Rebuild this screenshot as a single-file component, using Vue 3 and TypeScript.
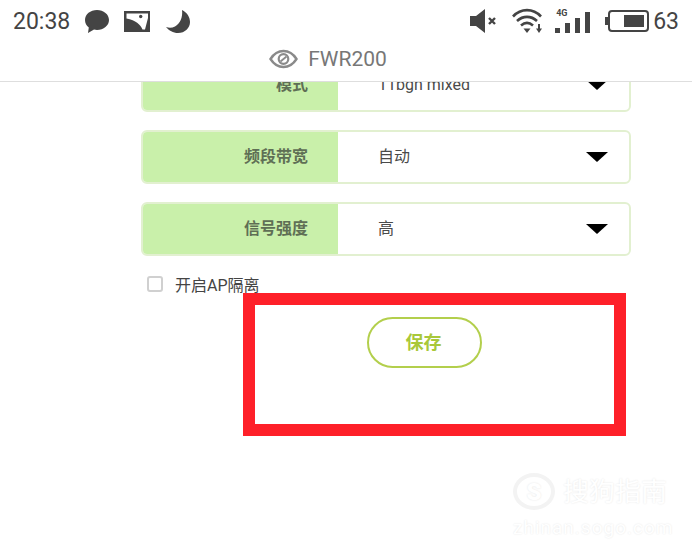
<script setup lang="ts">
interface SelectRow {
  label: string
  value: string
}

const rows: SelectRow[] = [
  { label: '模式', value: '11bgn mixed' },
  { label: '频段带宽', value: '自动' },
  { label: '信号强度', value: '高' },
]
</script>

<template>
  <div class="page">
    <header class="header">
      <div class="status-bar">
        <div class="status-left">
          <span class="time">20:38</span>
          <svg class="icon-bubble" width="26" height="25" viewBox="0 0 26 25">
            <path d="M13 1C6.400 1 1 5.200 1 11c0 3 1.400 5.600 3.800 7.400L4 24l6-3.400c1 .2 2 .4 3 .4 6.600 0 12-4.400 12-10S19.600 1 13 1z" fill="#444" />
          </svg>
          <svg class="icon-picture" width="26" height="22" viewBox="0 0 26 22">
            <path d="M0 1h26v21H0z" fill="#444" />
            <path d="M2.500 3.500H24V8l-3 11.500h-2.500C16 14 12 10.500 2.500 8.500z" fill="#fff" />
            <circle cx="16.700" cy="6.500" r="1.700" fill="#444" />
          </svg>
          <svg class="icon-moon" width="24" height="25" viewBox="0 0 24 25">
            <path d="M16 1c5 2.500 8 7 8 12 0 6-5 11-12 11-5 0-9-2.500-12-6 3 1 6 1 9-.5 5-3 8-9 7-16.500z" fill="#444" />
          </svg>
        </div>
        <div class="status-right">
          <svg class="icon-mute" width="27" height="24" viewBox="0 0 27 24">
            <path d="M0 7h6l9-7v24l-9-7H0z" fill="#444" />
            <path d="M19 9l6 6M25 9l-6 6" stroke="#444" stroke-width="2.400" />
          </svg>
          <svg class="icon-wifi" width="32" height="26" viewBox="0 0 32 26">
            <path d="M1 8.500c8-8.500 20-8.500 28 0M5 13c6-5.500 14-5.500 20 0M9 17.500c4-3.500 8-3.500 12 0" fill="none" stroke="#444" stroke-width="2.600" />
            <path d="M11.500 20.500h7L15 25z" fill="#444" />
            <path d="M27 16v6" stroke="#444" stroke-width="2" />
            <path d="M24 20.500h6L27 25z" fill="#444" />
          </svg>
          <div class="signal">
            <span class="net-label">4G</span>
            <span v-for="h in [5, 10, 15, 21]" :key="h" class="bar" :style="{ height: h + 'px' }"></span>
          </div>
          <div class="battery">
            <span class="battery-cap"></span>
            <span class="battery-body"><span class="battery-fill"></span></span>
          </div>
          <span class="level">63</span>
        </div>
      </div>
      <div class="title-bar">
        <svg width="29" height="20" viewBox="0 0 29 20">
          <path d="M1.500 10C5 4.500 9.500 2 14.500 2s9.500 2.500 13 8c-3.500 5.500-8 8-13 8s-9.500-2.500-13-8z" fill="none" stroke="#8a8a8a" stroke-width="2.400" />
          <circle cx="14.500" cy="10" r="4.800" fill="none" stroke="#8a8a8a" stroke-width="2.200" />
          <path d="M11.500 12.500l6-5" stroke="#8a8a8a" stroke-width="1.800" />
        </svg>
        <span class="device-name">FWR200</span>
      </div>
    </header>

    <main class="content">
      <form class="form" @submit.prevent>
        <div v-for="row in rows" :key="row.label" class="select-row">
          <div class="select-label">{{ row.label }}</div>
          <div class="select-value">
            <span class="value-text">{{ row.value }}</span>
            <span class="arrow"></span>
          </div>
        </div>
        <label class="check-row">
          <span class="checkbox"></span>
          <span>开启AP隔离</span>
        </label>
        <div class="actions">
          <button type="button" class="save-btn">保存</button>
        </div>
      </form>
    </main>

    <div class="highlight"></div>

    <div class="watermark">
      <div class="wm-top">
        <span class="wm-logo">S</span>
        <span class="wm-name">搜狗指南</span>
      </div>
      <div class="wm-url">zhinan.sogo.com</div>
    </div>
  </div>
</template>

<style>
html,
body {
  margin: 0;
  background: #fff;
}
</style>

<style scoped>
.page {
  position: relative;
  width: 692px;
  height: 560px;
  overflow: hidden;
  background: #fff;
  font-family: Roboto, "Noto Sans CJK SC", sans-serif;
}

.header {
  height: 81px;
  border-bottom: 1px solid #dedede;
}

.status-bar {
  height: 42px;
  display: flex;
  justify-content: space-between;
  align-items: center;
  padding: 0 13px;
}

.status-left,
.status-right {
  display: flex;
  align-items: center;
}

.time {
  font-size: 23px;
  color: #444;
  width: 71px;
}

.icon-picture {
  margin-left: 14px;
}

.icon-moon {
  margin-left: 16px;
}

.icon-wifi {
  margin-left: 15px;
}

.signal {
  position: relative;
  display: flex;
  align-items: flex-end;
  gap: 5px;
  height: 23px;
  margin-left: 11px;
}

.net-label {
  position: absolute;
  left: 1px;
  top: -2px;
  font-size: 9px;
  font-weight: 700;
  color: #444;
}

.bar {
  width: 5px;
  background: #444;
}

.battery {
  display: flex;
  align-items: center;
  margin-left: 15px;
}

.battery-cap {
  width: 3px;
  height: 8px;
  background: #444;
}

.battery-body {
  width: 41px;
  height: 22px;
  box-sizing: border-box;
  border: 2px solid #444;
  border-radius: 4px;
  padding: 3px;
  display: flex;
  justify-content: flex-end;
}

.battery-fill {
  width: 20px;
  background: #444;
}

.level {
  font-size: 23px;
  color: #444;
  margin-left: 4px;
}

.title-bar {
  height: 34px;
  padding-right: 36px;
  display: flex;
  justify-content: center;
  align-items: center;
  gap: 10px;
}

.device-name {
  font-size: 21px;
  color: #777;
}

.content {
  height: 478px;
  overflow: hidden;
}

.form {
  width: 490px;
  margin: -24px 0 0 141px;
}

.select-row {
  display: flex;
  height: 54px;
  margin-bottom: 18px;
  border: 2px solid #e2f0d0;
  border-radius: 6px;
  box-sizing: border-box;
  overflow: hidden;
}

.select-label {
  width: 197px;
  margin: -2px 0 -2px -2px;
  padding: 0 30px 4px 0;
  box-sizing: border-box;
  background: #c9f0aa;
  color: #5f6f55;
  font-size: 16px;
  font-weight: 700;
  display: flex;
  align-items: center;
  justify-content: flex-end;
  flex-shrink: 0;
}

.select-value {
  flex: 1;
  display: flex;
  align-items: center;
  justify-content: space-between;
  padding: 0 21px 0 40px;
  font-size: 16px;
  color: #4a4a4a;
}

.value-text {
  line-height: 20px;
  margin-top: -1px;
}

.arrow {
  width: 0;
  height: 0;
  border-left: 11px solid transparent;
  border-right: 11px solid transparent;
  border-top: 10px solid #000;
}

.check-row {
  display: flex;
  align-items: center;
  gap: 12px;
  margin: -1px 0 0 6px;
  height: 22px;
  font-size: 16px;
  color: #444;
}

.checkbox {
  width: 16px;
  height: 16px;
  box-sizing: border-box;
  border: 2px solid #d0d0d0;
  border-radius: 3px;
}

.actions {
  display: flex;
  margin-top: 22px;
  padding-left: 226px;
}

.save-btn {
  width: 115px;
  height: 51px;
  padding: 0 2px 4px 0;
  background: #fff;
  border: 2px solid #b3cf4c;
  border-radius: 26px;
  color: #a9c83a;
  font-family: inherit;
  font-size: 18px;
  font-weight: 700;
}

.highlight {
  position: absolute;
  left: 243px;
  top: 293px;
  width: 383px;
  height: 143px;
  box-sizing: border-box;
  border: 12px solid #fe2029;
  pointer-events: none;
}

.watermark {
  position: absolute;
  left: 513px;
  top: 473px;
  width: 165px;
  color: #fff;
  text-shadow: 0 0 2px #e4e4e4;
}

.wm-top {
  display: flex;
  align-items: center;
  gap: 8px;
}

.wm-logo {
  width: 42px;
  height: 37px;
  box-sizing: border-box;
  border: 4px solid #f3f3f3;
  border-radius: 50%;
  display: flex;
  align-items: center;
  justify-content: center;
  font-size: 24px;
  font-weight: 900;
}

.wm-name {
  font-size: 26px;
  line-height: 36px;
  white-space: nowrap;
}

.wm-url {
  margin-top: 8px;
  font-size: 19px;
  line-height: 20px;
  letter-spacing: 1px;
  white-space: nowrap;
}
</style>
